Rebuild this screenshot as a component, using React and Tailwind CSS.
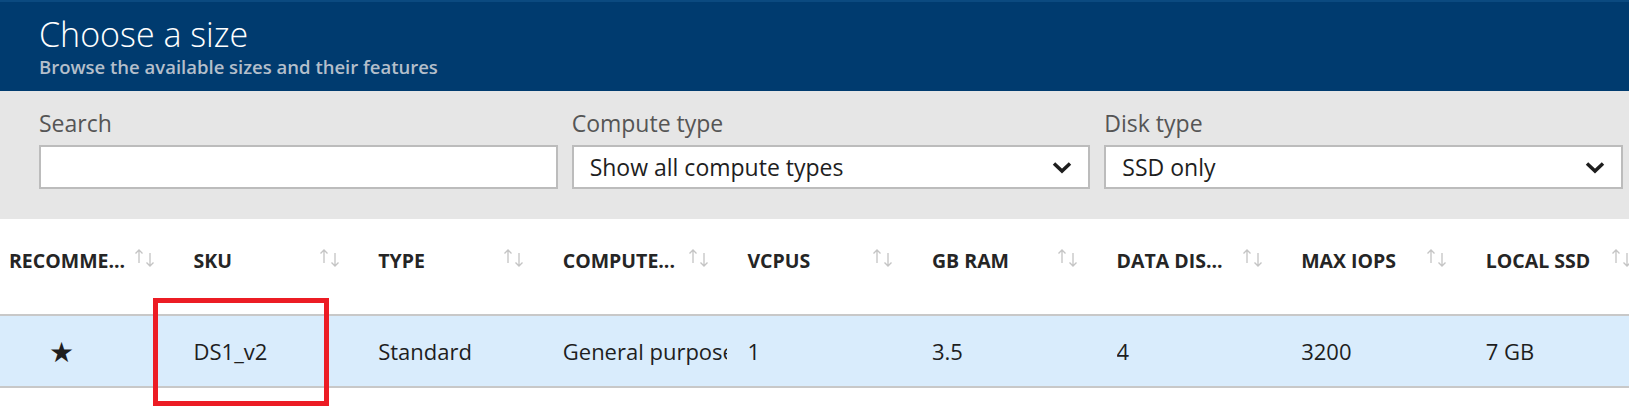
const COLUMNS = [
  "RECOMME...",
  "SKU",
  "TYPE",
  "COMPUTE...",
  "VCPUS",
  "GB RAM",
  "DATA DIS...",
  "MAX IOPS",
  "LOCAL SSD",
];

const ROW = ["DS1_v2", "Standard", "General purpose", "1", "3.5", "4", "3200", "7 GB"];

function Chevron() {
  return (
    <svg width="20" height="13" viewBox="0 0 20 13" className="text-[#1e1e1e]">
      <path d="M2 2.5 L10 10 L18 2.5" fill="none" stroke="currentColor" strokeWidth="3.5" />
    </svg>
  );
}

function SortArrows() {
  return (
    <svg width="22" height="18" viewBox="0 0 22 18" className="text-[#c4c4c4] relative -top-[3px]">
      <g fill="none" stroke="currentColor" strokeWidth="1.3">
        <path d="M5 14 V1 M1.5 4.5 L5 1 L8.5 4.5" />
        <path d="M16 4 V17 M12.5 13.5 L16 17 L19.5 13.5" />
      </g>
    </svg>
  );
}

function Field({ label, value, select }) {
  return (
    <div className="flex flex-col">
      <div className="text-[23px] leading-[30px] text-[#555555] mb-[7px]">{label}</div>
      <div className="h-[44px] bg-white border-2 border-[#bcbcbc] flex items-center justify-between pl-[16px] pr-[16px]">
        <span className="text-[23px] text-[#1e1e1e]">{value}</span>
        {select && <Chevron />}
      </div>
    </div>
  );
}

export default function App() {
  return (
    <div
      className="w-[1629px] h-[417px] overflow-hidden bg-white relative"
      style={{ fontFamily: '"Open Sans", "Noto Sans", sans-serif' }}
    >
      {/* HEADER */}
      <div className="h-[91px] bg-[#003b6f] border-t-2 border-[#0b4a80] pl-[39px] pt-[12px]">
        <div className="text-[34px] leading-[40px] font-light text-white">Choose a size</div>
        <div className="text-[18.5px] leading-[24px] font-semibold text-[#b4bfcb] mt-[1px]">
          Browse the available sizes and their features
        </div>
      </div>

      {/* FILTERS */}
      <div className="h-[128px] bg-[#e6e6e6] pl-[39px] pr-[6px] pt-[17px] grid grid-cols-3 gap-[14px] items-start">
        <Field label="Search" value="" />
        <Field label="Compute type" value="Show all compute types" select />
        <Field label="Disk type" value="SSD only" select />
      </div>

      {/* TABLE HEADER */}
      <div className="h-[95px] flex items-center pl-[9px] pb-[12px]">
        {COLUMNS.map((c) => (
          <div key={c} className="w-[184.6px] shrink-0 flex items-center">
            <span className="w-[125px] shrink-0 text-[19.5px] font-bold text-[#252525] whitespace-nowrap">{c}</span>
            <SortArrows />
          </div>
        ))}
      </div>

      {/* ROW */}
      <div className="h-[74px] bg-[#d9ecfc] border-y-2 border-[#c8c8c8] flex items-center pl-[9px] text-[22px] text-[#1e1e1e]">
        <div className="w-[184.6px] shrink-0 pl-[40px] text-[28px] leading-none">★</div>
        {ROW.map((v, i) => (
          <div key={i} className="w-[184.6px] shrink-0 pr-[20px]">
            <div className="whitespace-nowrap overflow-hidden">{v}</div>
          </div>
        ))}
      </div>

      {/* highlight box */}
      <div className="absolute left-[153px] top-[298px] w-[176px] h-[108px] border-[5px] border-[#ec1c24]" />
    </div>
  );
}
